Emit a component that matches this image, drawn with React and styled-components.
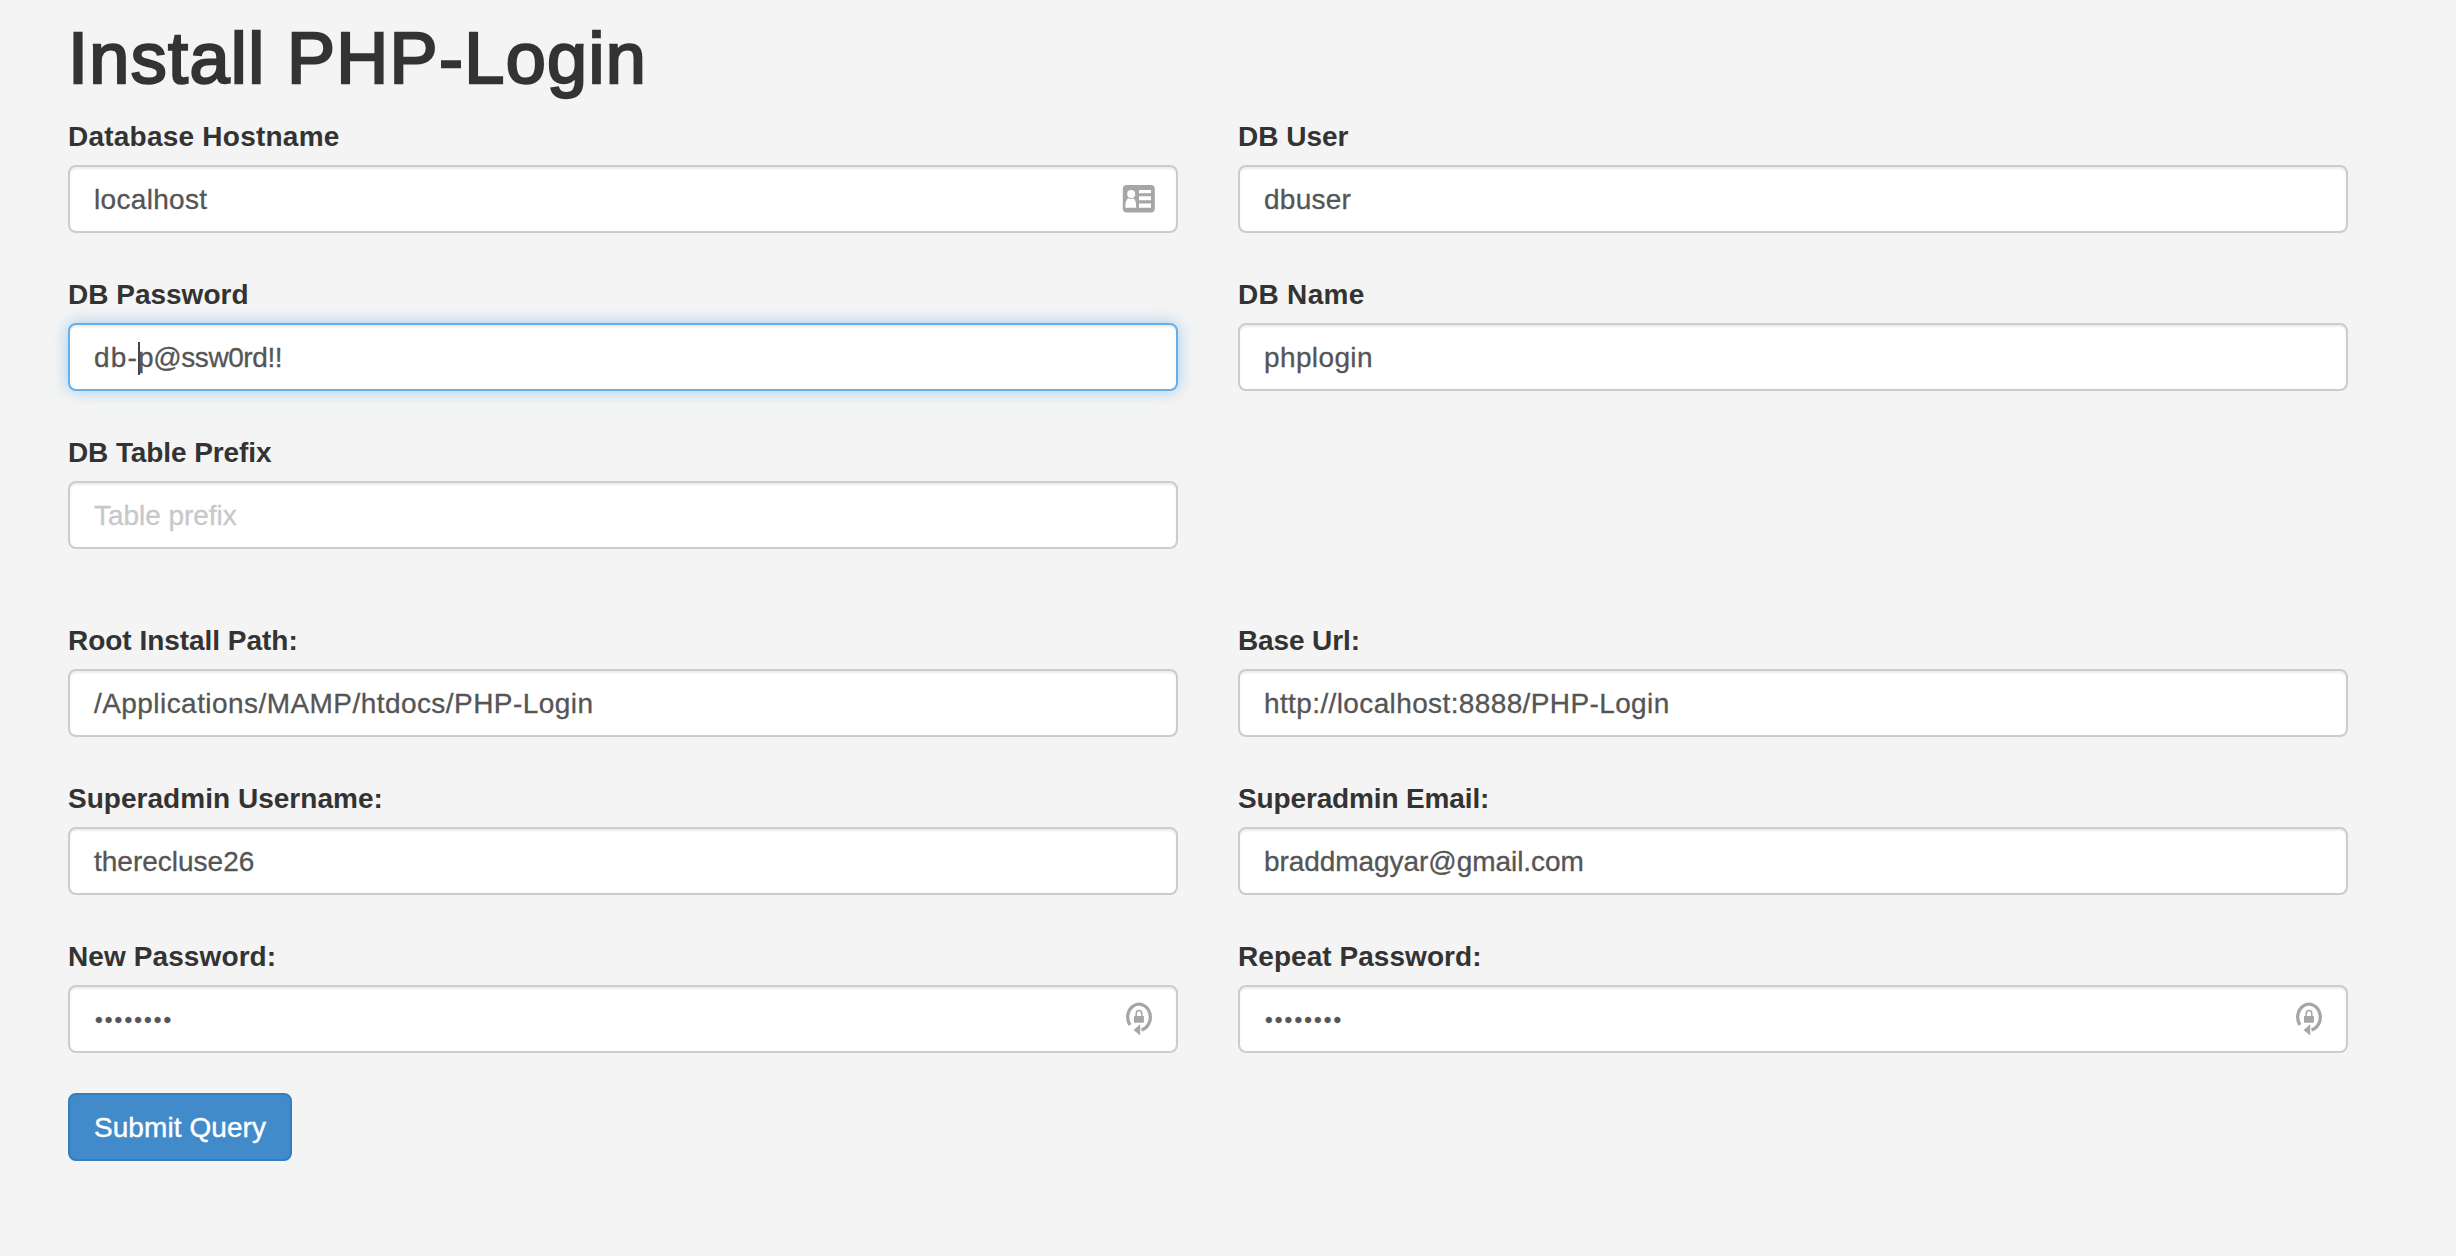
import React from "react";
import styled, { createGlobalStyle, css } from "styled-components";

const GlobalStyle = createGlobalStyle`
  *, *::before, *::after { box-sizing: border-box; }
  body {
    margin: 0;
    background: #f4f4f4;
    color: #333;
    font-family: "Helvetica Neue", "Liberation Sans", Arial, sans-serif;
    font-size: 28px;
    line-height: 40px;
  }
`;

const Page = styled.main`
  min-height: 1256px;
  padding: 19px 108px 0 68px;
`;

const Title = styled.h1`
  margin: 0 0 17px;
  font-size: 72px;
  font-weight: 400;
  line-height: 79px;
  letter-spacing: 1.35px;
  -webkit-text-stroke: 2.4px #333;
  paint-order: stroke fill;
`;

const Grid = styled.section`
  display: grid;
  grid-template-columns: 1110px 1110px;
  column-gap: 60px;
  row-gap: 40px;
  margin-bottom: ${(p) => p.$gap}px;
`;

const Field = styled.div`
  display: flex;
  flex-direction: column;
`;

const Label = styled.label`
  height: 44px;
  margin-bottom: 6px;
  font-weight: 700;
  line-height: 44px;
  letter-spacing: ${(p) => p.$spacing}px;
  white-space: pre;
`;

const Control = styled.div`
  display: flex;
  align-items: center;
  justify-content: space-between;
  height: 68px;
  padding: 0 20px 0 24px;
  border: 2px solid #ccc;
  border-radius: 8px;
  background: #fff;
  color: #555;
  box-shadow: inset 0 2px 2px rgba(0, 0, 0, 0.075);
  ${(p) =>
    p.$focused &&
    css`
      border-color: #66afe9;
      box-shadow: inset 0 2px 2px rgba(0, 0, 0, 0.075), 0 0 16px rgba(102, 175, 233, 0.6);
    `}
`;

const Value = styled.span`
  display: flex;
  align-items: center;
  padding-top: 2px;
  white-space: pre;
  letter-spacing: ${(p) => p.$spacing || 0}px;
  color: ${(p) => (p.$placeholder ? "#c8c8c8" : "inherit")};
  -webkit-text-stroke: 0.3px currentColor;
`;

const Mask = styled(Value)`
  padding-left: 1px;
  font-size: 22px;
  letter-spacing: 2.1px;
`;

const Run = styled.span`
  letter-spacing: ${(p) => p.$spacing}px;
`;

const Caret = styled.i`
  width: 2px;
  height: 33px;
  margin: 0 -2px 0 0;
  background: #444;
`;

const SubmitButton = styled.button`
  width: 224px;
  height: 68px;
  padding: 2px 0 0;
  border: 2px solid #357ebd;
  border-radius: 8px;
  background: #428bca;
  color: #fff;
  font: inherit;
  letter-spacing: 0.07px;
  -webkit-text-stroke: 0.4px #fff;
`;

const Icon = styled.svg`
  display: block;
  flex: none;
  color: #a6a6a6;
`;

const CardIcon = () => (
  <Icon width="34" height="28" viewBox="0 0 34 28">
    <rect x="0.8" y="0" width="32" height="27.400" rx="4" fill="currentColor" />
    <circle cx="9.200" cy="9" r="4" fill="#fff" />
    <path d="M3.300 22.800c0-5.200.9-8.200 3.200-9.500q2.300 1.200 4.600 0c2.300 1.300 3.100 4.300 3.100 9.500z" fill="#fff" />
    <path d="M17 5h12v3.200h-12zM17 11.200h12v4h-12zM17 18.500h12v4.300h-12z" fill="#fff" />
  </Icon>
);

const LockIcon = () => (
  <Icon width="34" height="34" viewBox="0 0 34 34">
    <path d="M8 23A11.300 13 0 1 1 19.500 27.800" fill="none" stroke="currentColor" strokeWidth="3.300" />
    <path d="M11.600 28 18.200 22.200v11.300z" fill="currentColor" />
    <rect x="12" y="14" width="9.900" height="6.800" rx="0.500" fill="currentColor" />
    <path d="M14.200 14.500v-2.700a2.800 3.200 0 0 1 5.600 0v2.700" fill="none" stroke="currentColor" strokeWidth="1.500" />
  </Icon>
);

const DATABASE = [
  { label: "Database Hostname", ls: 0.23, value: "localhost", vs: 0.32, icon: <CardIcon /> },
  { label: "DB User", ls: 0, value: "dbuser", vs: 0.25 },
  { label: "DB Password", ls: 0, before: "db-", value: "p@ssw0rd!!", vs: -0.42, focused: true },
  { label: "DB Name", ls: 0.3, value: "phplogin", vs: 0.38 },
  { label: "DB Table Prefix", ls: -0.1, value: "Table prefix", vs: -0.05, placeholder: true },
];

const SITE = [
  { label: "Root Install Path:", ls: -0.03, value: "/Applications/MAMP/htdocs/PHP-Login", vs: 0.44 },
  { label: "Base Url:", ls: -0.12, value: "http://localhost:8888/PHP-Login", vs: 0.38 },
  { label: "Superadmin Username:", ls: 0.03, value: "therecluse26", vs: 0 },
  { label: "Superadmin Email:", ls: -0.14, value: "braddmagyar@gmail.com", vs: -0.06 },
  { label: "New Password:", ls: 0.1, value: "••••••••", masked: true, icon: <LockIcon /> },
  { label: "Repeat Password:", ls: 0.05, value: "••••••••", masked: true, icon: <LockIcon /> },
];

function FieldValue({ before, value, vs, placeholder, masked }) {
  if (masked) return <Mask $spacing={0}>{value}</Mask>;
  if (before) {
    return (
      <Value>
        <Run $spacing={1.2}>{before}</Run>
        <Caret />
        <Run $spacing={vs}>{value}</Run>
      </Value>
    );
  }
  return (
    <Value $spacing={vs} $placeholder={placeholder}>
      {value}
    </Value>
  );
}

function FormField({ label, ls, icon, focused, ...value }) {
  return (
    <Field>
      <Label $spacing={ls}>{label}</Label>
      <Control $focused={focused}>
        <FieldValue {...value} />
        {icon}
      </Control>
    </Field>
  );
}

export default function App() {
  return (
    <>
      <GlobalStyle />
      <Page>
        <Title>Install PHP-Login</Title>
        <Grid $gap={70}>
          {DATABASE.map((f) => (
            <FormField key={f.label} {...f} />
          ))}
        </Grid>
        <Grid $gap={40}>
          {SITE.map((f) => (
            <FormField key={f.label} {...f} />
          ))}
        </Grid>
        <SubmitButton type="button">Submit Query</SubmitButton>
      </Page>
    </>
  );
}
